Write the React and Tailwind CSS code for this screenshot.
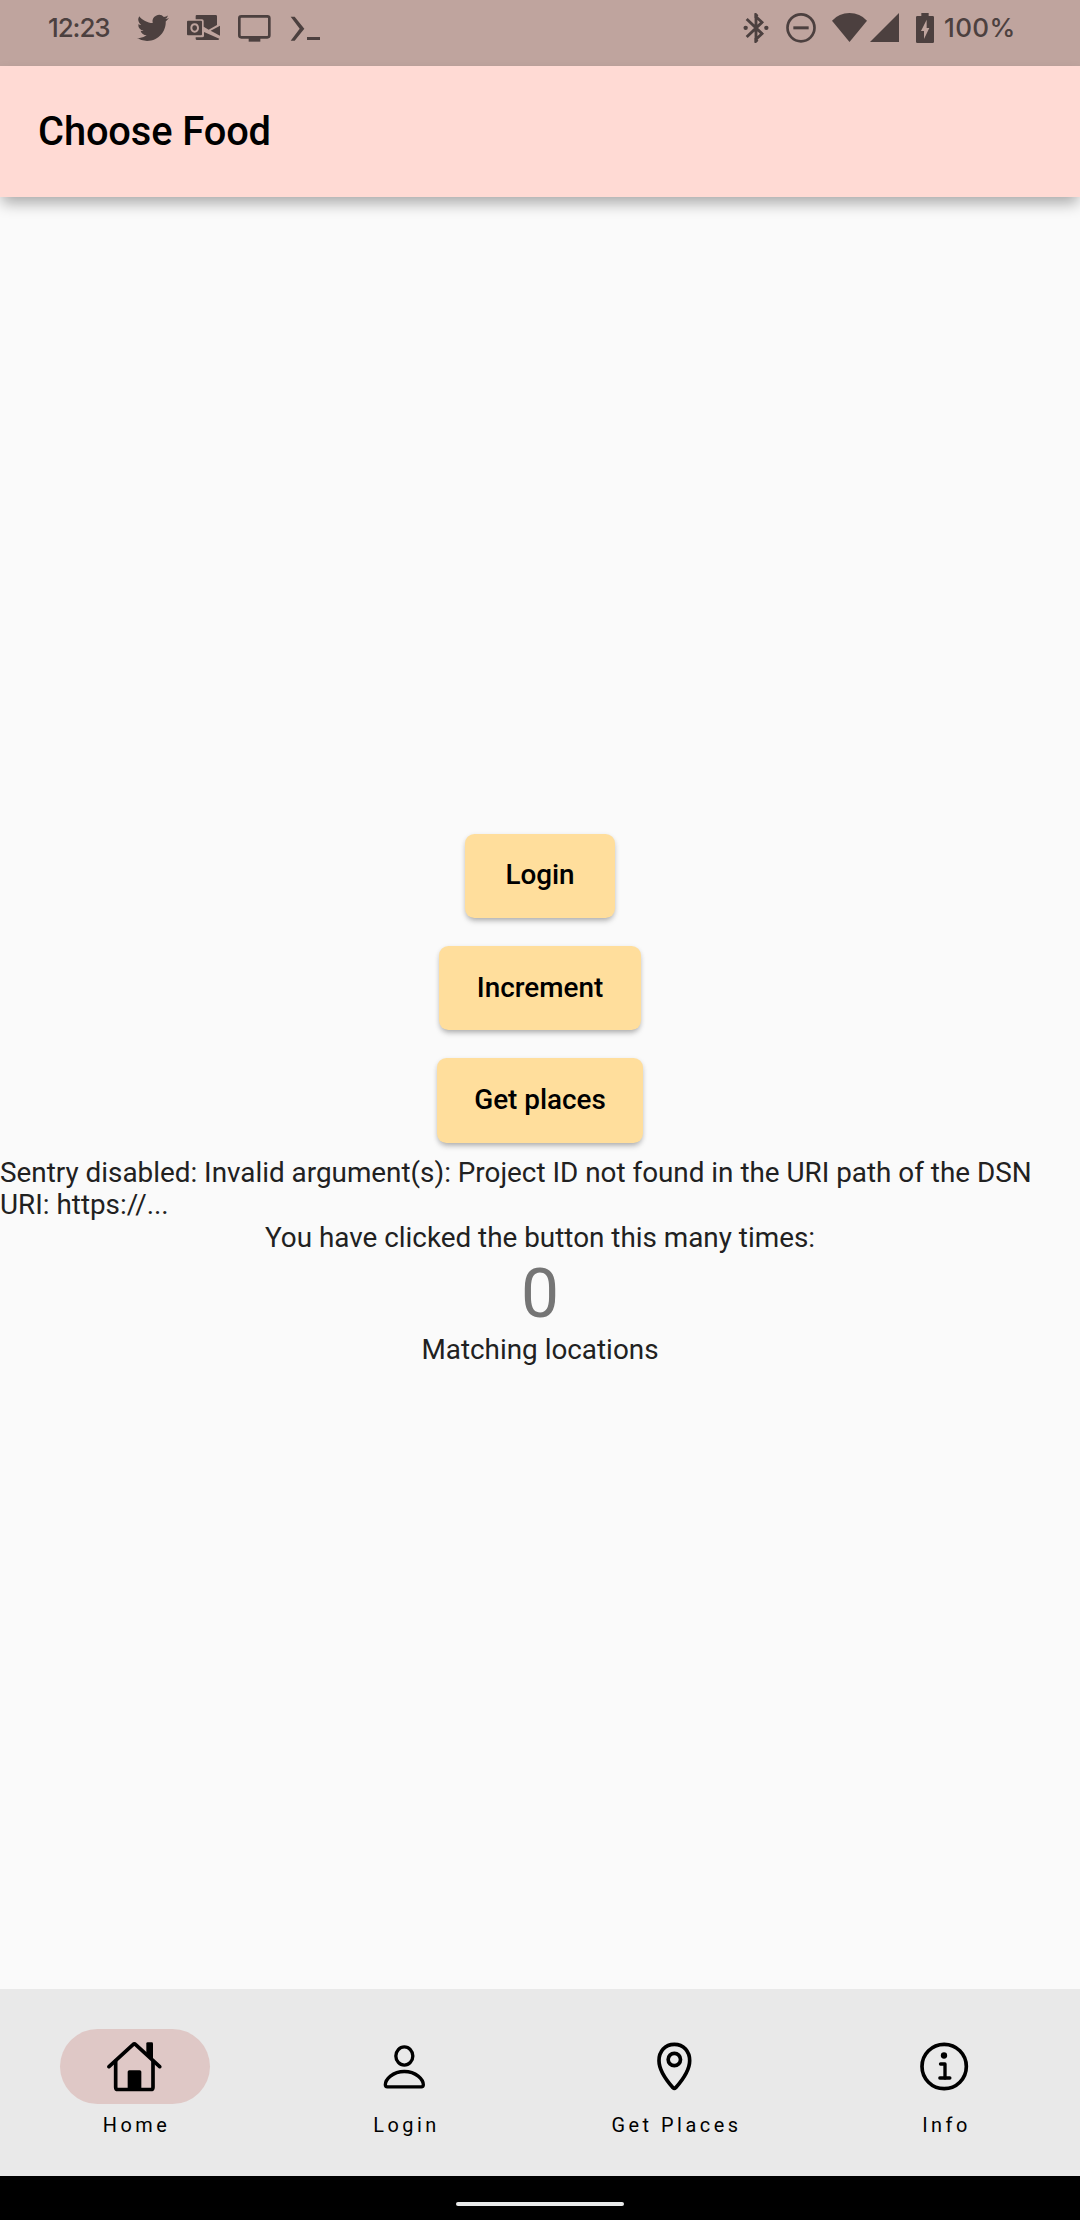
import React from "react";

function TwitterIcon() {
  return (
    <svg viewBox="405 0 105 198" className="h-[66px] w-[35px]" fill="currentColor">
      <g transform="translate(411 36) scale(4)">
        <path d="M23.95 4.57a10 10 0 0 1-2.82.77 4.96 4.96 0 0 0 2.16-2.72c-.95.55-2 .95-3.13 1.18a4.92 4.92 0 0 0-8.38 4.48C7.69 8.1 4.07 6.13 1.64 3.16a4.92 4.92 0 0 0 1.52 6.57 4.9 4.9 0 0 1-2.23-.61v.06a4.92 4.92 0 0 0 3.95 4.83 5 5 0 0 1-2.21.08 4.94 4.94 0 0 0 4.6 3.42A9.87 9.87 0 0 1 0 19.54a13.99 13.99 0 0 0 7.55 2.21c9.05 0 14-7.5 14-13.98 0-.21 0-.42-.02-.63a9.94 9.94 0 0 0 2.46-2.55z" />
      </g>
    </svg>
  );
}

function OutlookIcon() {
  return (
    <svg viewBox="555 0 108 198" className="h-[66px] w-[36px]" fill="currentColor">
      <path d="M590 45h57q4 0 4 4v26l-25 14-15-9v-17q0-5-5-5h-19v-10q0-3 3-3z" />
      <path fillRule="evenodd" d="M564 62h39q3 0 3 3v38q0 3-3 3h-39q-3 0-3-3V65q0-3 3-3zm20 8c-8 0-13 6-13 14s5 14 13 14 13-6 13-14-5-14-13-14zm0 6c5 0 7 4 7 8s-2 8-7 8-7-4-7-8 2-8 7-8z" />
      <path d="M660 77v30l-28-15z" />
      <path d="M587 112h19q6 0 6-5V96l46 20q-1 4-5 4h-62q-4 0-4-4z" />
    </svg>
  );
}

function ScreenIcon() {
  return (
    <svg viewBox="708 0 114 198" className="h-[66px] w-[38px]" fill="none" stroke="currentColor">
      <rect x="718" y="49" width="90" height="63" rx="6" strokeWidth="8" />
      <path d="M746 119.500h35" strokeWidth="11" />
    </svg>
  );
}

function TerminalIcon() {
  return (
    <svg viewBox="867 0 99 198" className="h-[66px] w-[33px]" fill="currentColor">
      <path d="M872 50h12l29 36-29 36h-12l27-36z" />
      <path d="M921 111h39v9h-39z" />
    </svg>
  );
}

function BluetoothIcon() {
  return (
    <svg viewBox="66 0 87 198" className="h-[66px] w-[29px]" fill="none" stroke="currentColor" strokeWidth="8.500">
      <path d="M80 57l46 44-18 17V50l18 17-46 44" />
      <path d="M103.700 39h4.500l7 7-6 8h-5.500zM103.700 129h4.500l7-7-6-8h-5.500z" fill="currentColor" stroke="none" />
      <circle cx="77" cy="83.500" r="6.500" fill="currentColor" stroke="none" />
      <circle cx="139" cy="83.500" r="6.500" fill="currentColor" stroke="none" />
    </svg>
  );
}

function DoNotDisturbIcon() {
  return (
    <svg viewBox="195 0 96 198" className="h-[66px] w-[32px]" fill="none" stroke="currentColor">
      <circle cx="243" cy="83.500" r="40.500" strokeWidth="8" />
      <path d="M220 83.500h46" strokeWidth="9" />
    </svg>
  );
}

function NetworkIcon() {
  return (
    <svg viewBox="333 0 210 198" className="h-[66px] w-[70px]" fill="currentColor">
      <path d="M336 62Q357 39 388.500 39T441 62L388.500 126z" />
      <path d="M537 39v87h-87z" />
    </svg>
  );
}

function BatteryIcon() {
  return (
    <svg viewBox="585 0 60 198" className="h-[66px] w-[20px]" fill="currentColor">
      <path
        fillRule="evenodd"
        d="M604 39h22v9h12q4 0 4 4v73q0 4-4 4h-46q-4 0-4-4V52q0-4 4-4h12zM620 59L603 93h9v24l16-33h-8z"
      />
    </svg>
  );
}

function HomeIcon() {
  return (
    <svg viewBox="201 175.500 168 168" className="size-14" fill="none" stroke="currentColor" strokeWidth="11" strokeLinecap="round" strokeLinejoin="round">
      <path d="M207 258.500l72-66q4-4 8 0l72 66" />
      <path d="M227 242v78q0 7 7 7h98q7 0 7-7v-78" />
      <path d="M319 222v-33q0-4 4-4h12q4 0 4 4v51z" fill="currentColor" stroke="none" />
      <path d="M263 327v-53q0-5 5-5h31q5 0 5 5v53z" fill="currentColor" stroke="none" />
    </svg>
  );
}

function PersonIcon() {
  return (
    <svg viewBox="111 175.500 168 168" className="size-14" fill="none" stroke="currentColor" strokeWidth="10" strokeLinejoin="round">
      <ellipse cx="193" cy="226.500" rx="25.500" ry="27.500" />
      <path d="M142 319h102q6 0 6-6c0-16-22-40-57-40s-57 24-57 40q0 6 6 6z" />
    </svg>
  );
}

function PinIcon() {
  return (
    <svg viewBox="201 175.500 168 168" className="size-14" fill="none" stroke="currentColor" strokeWidth="11" strokeLinejoin="round">
      <path d="M283 191.500c-28 0-46 21-46 49 0 29 26 63 42 81q4 4 8 0c16-18 42-52 42-81 0-28-18-49-46-49z" />
      <circle cx="283" cy="237" r="18.500" />
    </svg>
  );
}

function InfoIcon() {
  return (
    <svg viewBox="231 175.500 168 168" className="size-14" fill="none" stroke="currentColor" strokeLinecap="round" strokeLinejoin="round">
      <circle cx="312.500" cy="258" r="66.500" strokeWidth="11" />
      <circle cx="312" cy="225" r="9.500" fill="currentColor" stroke="none" />
      <path d="M301.500 250.500H315v42" strokeWidth="10" />
      <path d="M299.500 292.500H329.500" strokeWidth="10" />
    </svg>
  );
}

const tabs = [
  { label: "Home", Icon: HomeIcon, active: true },
  { label: "Login", Icon: PersonIcon },
  { label: "Get Places", Icon: PinIcon },
  { label: "Info", Icon: InfoIcon },
];

function StatusBar() {
  return (
    <div className="flex h-[66px] items-center bg-[#bfa49e] pr-[66px] pl-[47px] font-['Inter',sans-serif] text-[26px] font-medium text-[#4c403f]">
      <span className="w-[88px] pt-[3px] pb-[13px] pl-px leading-[50px] tracking-[-1.100px]">12:23</span>
      <div className="flex gap-[15px]">
        <TwitterIcon />
        <OutlookIcon />
        <ScreenIcon />
        <TerminalIcon />
      </div>
      <div className="ml-auto flex gap-[14px]">
        <BluetoothIcon />
        <DoNotDisturbIcon />
        <NetworkIcon />
        <BatteryIcon />
      </div>
      <span className="w-[79px] pt-[3px] pb-[13px] pl-[9px] leading-[50px] tracking-[0.400px]">100%</span>
    </div>
  );
}

function FoodButton({ children }) {
  return (
    <div className="flex h-[112.400px] items-center">
      <button className="h-[84.400px] min-w-[150px] rounded-[9.400px] bg-[#ffde9c] px-[37.500px] text-[27.850px] font-medium text-black shadow-[0_5px_7px_-3px_rgba(0,0,0,0.22),0_2px_5px_0_rgba(0,0,0,0.16)]">
        {children}
      </button>
    </div>
  );
}

export default function App() {
  return (
    <div className="flex h-[2220px] w-[1080px] flex-col overflow-hidden bg-[#fafafa] font-['Roboto',sans-serif]">
      <StatusBar />
      <header className="relative flex h-[131px] items-center bg-[#ffdad4] px-[38px] shadow-[0_8px_14px_-2px_rgba(0,0,0,0.33)]">
        <h1 className="text-[39.800px] leading-[48px] font-medium tracking-[-0.100px] text-black">Choose Food</h1>
      </header>
      <main className="flex flex-1 flex-col items-center justify-center text-[27.850px] leading-[32.700px] text-[#212121]">
        <FoodButton>Login</FoodButton>
        <FoodButton>Increment</FoodButton>
        <FoodButton>Get places</FoodButton>
        <p className="self-stretch">
          Sentry disabled: Invalid argument(s): Project ID not found in the URI path of the DSN URI: https://...
        </p>
        <p>You have clicked the button this many times:</p>
        <p className="text-[67.700px] leading-[79px] text-[#757575]">0</p>
        <p>Matching locations</p>
      </main>
      <nav className="grid h-[187px] grid-cols-4 bg-[#e9e9e9] pt-[40px] text-black">
        {tabs.map(({ label, Icon, active }) => (
          <div key={label} className="flex flex-col items-center">
            <div className={active ? "flex h-[75px] w-[150px] items-center justify-center rounded-full bg-[#dfc8c6]" : "flex h-[75px] w-[150px] items-center justify-center"}>
              <Icon />
            </div>
            <span className="mt-[10px] pl-[3px] text-[19.900px] leading-6 tracking-[3.520px]">{label}</span>
          </div>
        ))}
      </nav>
      <footer className="flex h-[44px] justify-center bg-black pt-[26px]">
        <div className="h-1 w-[168px] rounded-full bg-[#e9eaea]" />
      </footer>
    </div>
  );
}
